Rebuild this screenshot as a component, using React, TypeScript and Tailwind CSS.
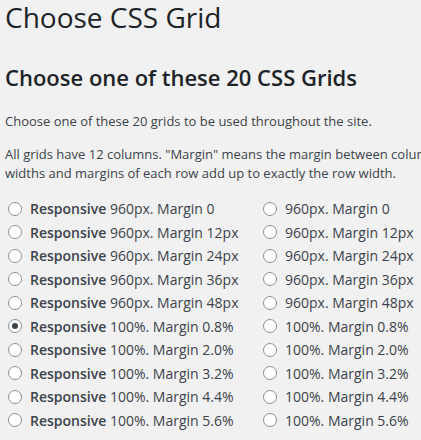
import React from "react";

const rows = [
  ["960px. Margin 0", "960px. Margin 0"],
  ["960px. Margin 12px", "960px. Margin 12px"],
  ["960px. Margin 24px", "960px. Margin 24px"],
  ["960px. Margin 36px", "960px. Margin 36px"],
  ["960px. Margin 48px", "960px. Margin 48px"],
  ["100%. Margin 0.8%", "100%. Margin 0.8%"],
  ["100%. Margin 2.0%", "100%. Margin 2.0%"],
  ["100%. Margin 3.2%", "100%. Margin 3.2%"],
  ["100%. Margin 4.4%", "100%. Margin 4.4%"],
  ["100%. Margin 5.6%", "100%. Margin 5.6%"],
];

const Radio = ({ checked }: { checked?: boolean }) => (
  <span className="flex h-[14px] w-[14px] shrink-0 items-center justify-center rounded-full border border-[#8c8f94] bg-white">
    {checked && <span className="h-[6px] w-[6px] rounded-full bg-[#3c434a]" />}
  </span>
);

export default function App() {
  const [selected, setSelected] = React.useState("r-5");

  return (
    <div className="h-[440px] w-[421px] overflow-hidden bg-[#f1f1f1] font-['Open_Sans',sans-serif] text-[#3c434a]">
      <div className="w-[560px] pl-[5px] pt-[1px]">
        <h1 className="text-[28px] leading-[32px] font-normal text-[#1d2327]">Choose CSS Grid</h1>
        <h2 className="mt-[28.5px] text-[22px] leading-[30px] font-semibold text-[#1d2327]">
          Choose one of these 20 CSS Grids
        </h2>
        <p className="mt-[20px] text-[13px] leading-[19px]">
          Choose one of these 20 grids to be used throughout the site.
        </p>
        <p className="mt-[14px] text-[13px] leading-[19px]">
          All grids have 12 columns. "Margin" means the margin between columns. The column widths and margins of each
          row add up to exactly the row width.
        </p>
        <div className="mt-[14.5px] grid grid-cols-[255px_auto] pl-[3px] text-[14px]">
          {rows.map(([a, b], i) => (
            <React.Fragment key={i}>
              <label className="flex h-[23.5px] cursor-pointer items-center gap-[8px]" onClick={() => setSelected(`r-${i}`)}>
                <Radio checked={selected === `r-${i}`} />
                <span>
                  <b className="font-semibold">Responsive</b> {a}
                </span>
              </label>
              <label className="flex h-[23.5px] cursor-pointer items-center gap-[8px]" onClick={() => setSelected(`f-${i}`)}>
                <Radio checked={selected === `f-${i}`} />
                <span>{b}</span>
              </label>
            </React.Fragment>
          ))}
        </div>
      </div>
    </div>
  );
}
